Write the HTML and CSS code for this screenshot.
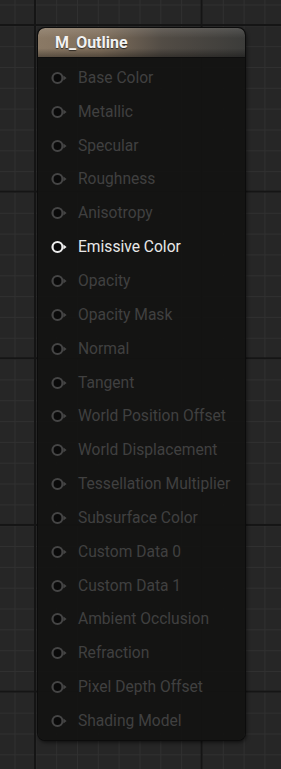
FILE: index.html
```html
<!DOCTYPE html>
<html>
<head>
  <title>M_Outline</title>
  <link rel="stylesheet" href="styles.css">
</head>
<body>
  <div class="node">
    <div class="node-header">M_Outline</div>
    <div class="node-body">
      <div class="pin"><svg class="pin-icon" width="17" height="14" viewBox="0 0 17 14"><circle cx="6.5" cy="7" r="5"/><path d="M12.4 4.6 L15.6 7 L12.4 9.4 Z"/></svg>Base Color</div>
      <div class="pin"><svg class="pin-icon" width="17" height="14" viewBox="0 0 17 14"><circle cx="6.5" cy="7" r="5"/><path d="M12.4 4.6 L15.6 7 L12.4 9.4 Z"/></svg>Metallic</div>
      <div class="pin"><svg class="pin-icon" width="17" height="14" viewBox="0 0 17 14"><circle cx="6.5" cy="7" r="5"/><path d="M12.4 4.6 L15.6 7 L12.4 9.4 Z"/></svg>Specular</div>
      <div class="pin"><svg class="pin-icon" width="17" height="14" viewBox="0 0 17 14"><circle cx="6.5" cy="7" r="5"/><path d="M12.4 4.6 L15.6 7 L12.4 9.4 Z"/></svg>Roughness</div>
      <div class="pin"><svg class="pin-icon" width="17" height="14" viewBox="0 0 17 14"><circle cx="6.5" cy="7" r="5"/><path d="M12.4 4.6 L15.6 7 L12.4 9.4 Z"/></svg>Anisotropy</div>
      <div class="pin active"><svg class="pin-icon" width="17" height="14" viewBox="0 0 17 14"><circle cx="6.5" cy="7" r="5"/><path d="M12.4 4.6 L15.6 7 L12.4 9.4 Z"/></svg>Emissive Color</div>
      <div class="pin"><svg class="pin-icon" width="17" height="14" viewBox="0 0 17 14"><circle cx="6.5" cy="7" r="5"/><path d="M12.4 4.6 L15.6 7 L12.4 9.4 Z"/></svg>Opacity</div>
      <div class="pin"><svg class="pin-icon" width="17" height="14" viewBox="0 0 17 14"><circle cx="6.5" cy="7" r="5"/><path d="M12.4 4.6 L15.6 7 L12.4 9.4 Z"/></svg>Opacity Mask</div>
      <div class="pin"><svg class="pin-icon" width="17" height="14" viewBox="0 0 17 14"><circle cx="6.5" cy="7" r="5"/><path d="M12.4 4.6 L15.6 7 L12.4 9.4 Z"/></svg>Normal</div>
      <div class="pin"><svg class="pin-icon" width="17" height="14" viewBox="0 0 17 14"><circle cx="6.5" cy="7" r="5"/><path d="M12.4 4.6 L15.6 7 L12.4 9.4 Z"/></svg>Tangent</div>
      <div class="pin"><svg class="pin-icon" width="17" height="14" viewBox="0 0 17 14"><circle cx="6.5" cy="7" r="5"/><path d="M12.4 4.6 L15.6 7 L12.4 9.4 Z"/></svg>World Position Offset</div>
      <div class="pin"><svg class="pin-icon" width="17" height="14" viewBox="0 0 17 14"><circle cx="6.5" cy="7" r="5"/><path d="M12.4 4.6 L15.6 7 L12.4 9.4 Z"/></svg>World Displacement</div>
      <div class="pin"><svg class="pin-icon" width="17" height="14" viewBox="0 0 17 14"><circle cx="6.5" cy="7" r="5"/><path d="M12.4 4.6 L15.6 7 L12.4 9.4 Z"/></svg>Tessellation Multiplier</div>
      <div class="pin"><svg class="pin-icon" width="17" height="14" viewBox="0 0 17 14"><circle cx="6.5" cy="7" r="5"/><path d="M12.4 4.6 L15.6 7 L12.4 9.4 Z"/></svg>Subsurface Color</div>
      <div class="pin"><svg class="pin-icon" width="17" height="14" viewBox="0 0 17 14"><circle cx="6.5" cy="7" r="5"/><path d="M12.4 4.6 L15.6 7 L12.4 9.4 Z"/></svg>Custom Data 0</div>
      <div class="pin"><svg class="pin-icon" width="17" height="14" viewBox="0 0 17 14"><circle cx="6.5" cy="7" r="5"/><path d="M12.4 4.6 L15.6 7 L12.4 9.4 Z"/></svg>Custom Data 1</div>
      <div class="pin"><svg class="pin-icon" width="17" height="14" viewBox="0 0 17 14"><circle cx="6.5" cy="7" r="5"/><path d="M12.4 4.6 L15.6 7 L12.4 9.4 Z"/></svg>Ambient Occlusion</div>
      <div class="pin"><svg class="pin-icon" width="17" height="14" viewBox="0 0 17 14"><circle cx="6.5" cy="7" r="5"/><path d="M12.4 4.6 L15.6 7 L12.4 9.4 Z"/></svg>Refraction</div>
      <div class="pin"><svg class="pin-icon" width="17" height="14" viewBox="0 0 17 14"><circle cx="6.5" cy="7" r="5"/><path d="M12.4 4.6 L15.6 7 L12.4 9.4 Z"/></svg>Pixel Depth Offset</div>
      <div class="pin"><svg class="pin-icon" width="17" height="14" viewBox="0 0 17 14"><circle cx="6.5" cy="7" r="5"/><path d="M12.4 4.6 L15.6 7 L12.4 9.4 Z"/></svg>Shading Model</div>
    </div>
  </div>
</body>
</html>
```

FILE: styles.css
```css
html, body {
  height: 100%;
}
body {
  margin: 0;
  padding: 28px 0 0 38px;
  box-sizing: border-box;
  font-family: Roboto, "Liberation Sans", sans-serif;
  background-color: #262626;
  background-image:
    linear-gradient(90deg, #151515 2px, transparent 2px),
    linear-gradient(#151515 2px, transparent 2px),
    linear-gradient(90deg, #303030 1px, transparent 1px),
    linear-gradient(#303030 1px, transparent 1px);
  background-size: 166.67px 166.67px, 166.67px 166.67px, 20.833px 20.833px, 20.833px 20.833px;
  background-position: 34px 24px, 34px 24px, 14.5px 4.5px, 14.5px 4.5px;
  overflow: hidden;
}
.node {
  width: 207px;
  height: 712px;
  border-radius: 7px;
  background-color: rgba(20, 20, 19, 0.96);
  box-shadow: 0 0 0 1px #0c0c0c, 1px 2px 4px rgba(0, 0, 0, 0.7);
  overflow: hidden;
}
.node-header {
  height: 29px;
  padding-left: 17px;
  line-height: 29px;
  font-size: 16px;
  font-weight: bold;
  color: #f2f2f2;
  text-shadow: 0 1px 1px rgba(0, 0, 0, 0.6);
  border-radius: 7px 7px 0 0;
  background:
    linear-gradient(rgba(255, 255, 255, 0.12), rgba(0, 0, 0, 0) 35%, rgba(0, 0, 0, 0) 70%, rgba(0, 0, 0, 0.35)),
    linear-gradient(90deg, #8a7965 0%, #806f5c 30%, #524c45 60%, #3c3c3a 100%);
  border-bottom: 1px solid #0e0e0e;
}
.node-body {
  padding-top: 3px;
}
.pin {
  display: flex;
  align-items: center;
  height: 33.85px;
  padding-left: 13px;
  font-size: 15.6px;
  color: #404040;
  white-space: nowrap;
}
.pin-icon {
  flex-shrink: 0;
  margin-right: 10px;
  fill: none;
  stroke: #454545;
  stroke-width: 2.2;
}
.pin-icon path {
  fill: #454545;
  stroke: none;
}
.pin-icon circle {
  fill: #0a0a0a;
}
.active {
  color: #e8e8e8;
}
.active .pin-icon {
  stroke: #eeeeee;
}
.active .pin-icon path {
  fill: #eeeeee;
}
```
